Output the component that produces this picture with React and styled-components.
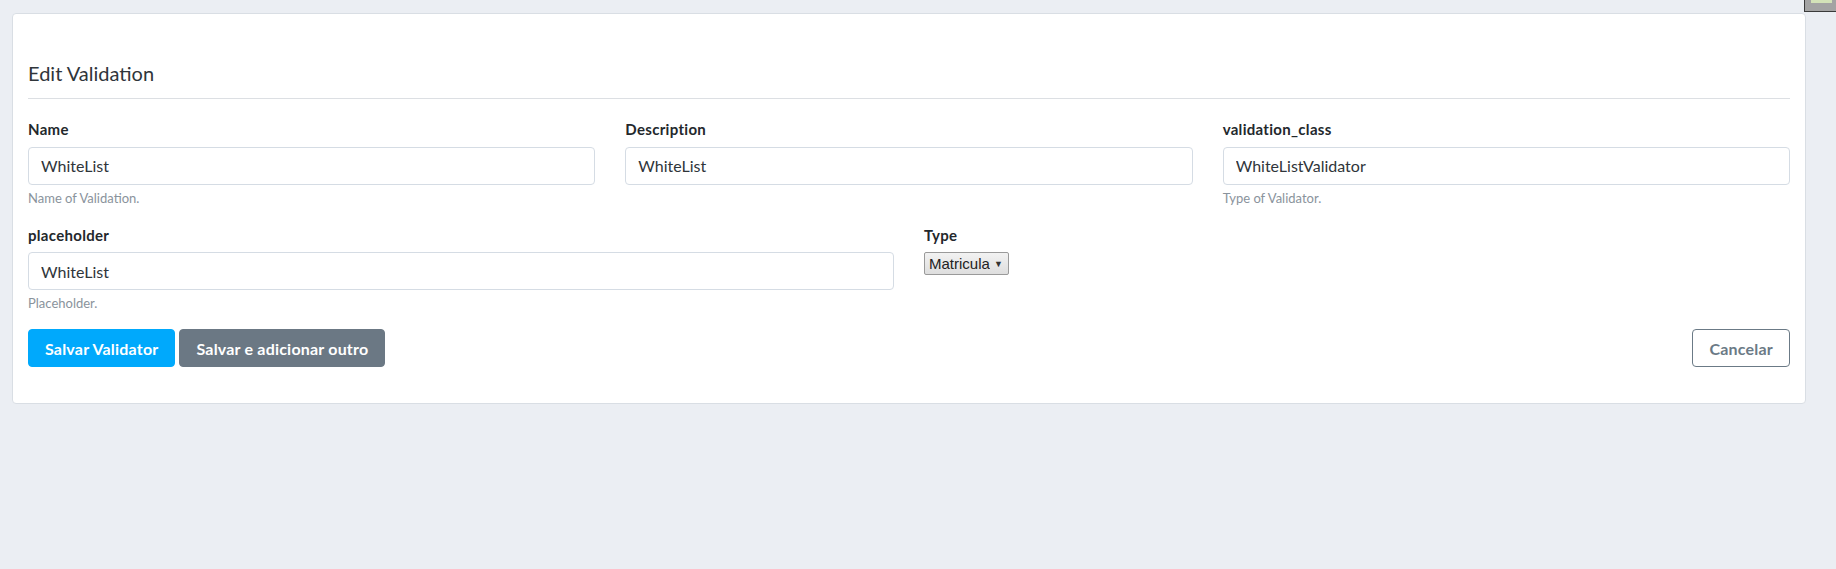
import React from 'react';
import styled, { createGlobalStyle } from 'styled-components';

const GlobalStyle = createGlobalStyle`
  body {
    margin: 0;
    background: #ebeef3;
    font-family: Lato, "Liberation Sans", sans-serif;
    color: #2f353a;
  }
`;

const Page = styled.div`
  position: relative;
  min-height: 569px;
  padding: 13px 30px 0 12px;
  box-sizing: border-box;
`;

const Card = styled.div`
  background: #fff;
  border: 1px solid #d9dee4;
  border-radius: 4px;
  padding: 47px 15px 36px;
`;

const Title = styled.h4`
  margin: 0 0 19px;
  padding-bottom: 13px;
  border-bottom: 1px solid #dcdfe3;
  font-size: 20px;
  font-weight: 400;
  line-height: 1.2;
  color: #2f353a;
`;

const Row = styled.div`
  display: grid;
  grid-template-columns: repeat(${(p) => p.cols}, 1fr);
  column-gap: 30px;
`;

const Group = styled.div`
  margin-bottom: 17px;
`;

const Label = styled.label`
  display: block;
  margin-bottom: 6px;
  font-size: 15px;
  font-weight: 700;
  letter-spacing: 0.3px;
  line-height: 1.5;
  color: #23282c;
`;

const Input = styled.input`
  display: block;
  width: 100%;
  height: 38px;
  box-sizing: border-box;
  padding: 6px 12px;
  border: 1px solid #d5dce4;
  border-radius: 4px;
  font-family: inherit;
  font-size: 16px;
  line-height: 1.5;
  color: #2f353a;
  background: #fff;
  outline: none;
`;

const Help = styled.small`
  display: block;
  margin-top: 4px;
  font-size: 13px;
  line-height: 1.4;
  color: #8a939c;
`;

const SelectBox = styled.span`
  display: inline-flex;
  align-items: center;
  gap: 4px;
  height: 23px;
  box-sizing: border-box;
  padding: 0 5px 0 4px;
  border: 1px solid #9a9a9a;
  border-radius: 2px;
  background: linear-gradient(#f2f2f2, #dedede);
`;

const Select = styled.select`
  appearance: none;
  border: none;
  background: transparent;
  padding: 0;
  font-family: "Liberation Sans", Arial, sans-serif;
  font-size: 15px;
  color: #222;
  outline: none;
`;

const Caret = styled.span`
  font-size: 9px;
  color: #333;
`;

const Actions = styled.div`
  display: flex;
  justify-content: space-between;
  align-items: center;
`;

const ButtonGroup = styled.div`
  display: flex;
  gap: 4px;
`;

const Button = styled.button`
  height: 38px;
  padding: 0 16px;
  border: 1px solid ${(p) => (p.$outline ? '#6b7a86' : p.$color)};
  border-radius: 4px;
  background: ${(p) => (p.$outline ? '#fff' : p.$color)};
  color: ${(p) => (p.$outline ? '#6b7a86' : '#fff')};
  font-family: inherit;
  font-size: 16px;
  font-weight: 700;
  letter-spacing: 0.2px;
  cursor: pointer;
`;

const Corner = styled.div`
  position: absolute;
  top: 0;
  right: 0;
  width: 31px;
  height: 11px;
  border-left: 1px solid #3a3a3a;
  border-bottom: 1px solid #3a3a3a;
  background: #a3a3a3;

  &::before {
    content: '';
    display: block;
    margin: 0 4px 0 6px;
    height: 3px;
    background: #d3e2b8;
  }
`;

const Field = ({ label, value, help }) => (
  <Group>
    <Label>{label}</Label>
    <Input defaultValue={value} />
    {help && <Help>{help}</Help>}
  </Group>
);

export default function App() {
  return (
    <Page>
      <GlobalStyle />
      <Corner />
      <Card>
        <Title>Edit Validation</Title>
        <Row cols={3}>
          <Field label="Name" value="WhiteList" help="Name of Validation." />
          <Field label="Description" value="WhiteList" />
          <Field label="validation_class" value="WhiteListValidator" help="Type of Validator." />
        </Row>
        <Row cols={2}>
          <Field label="placeholder" value="WhiteList" help="Placeholder." />
          <Group>
            <Label>Type</Label>
            <SelectBox>
              <Select defaultValue="matricula">
                <option value="matricula">Matricula</option>
              </Select>
              <Caret>▼</Caret>
            </SelectBox>
          </Group>
        </Row>
        <Actions>
          <ButtonGroup>
            <Button $color="#00a9fc">Salvar Validator</Button>
            <Button $color="#6b7884">Salvar e adicionar outro</Button>
          </ButtonGroup>
          <Button $outline>Cancelar</Button>
        </Actions>
      </Card>
    </Page>
  );
}
